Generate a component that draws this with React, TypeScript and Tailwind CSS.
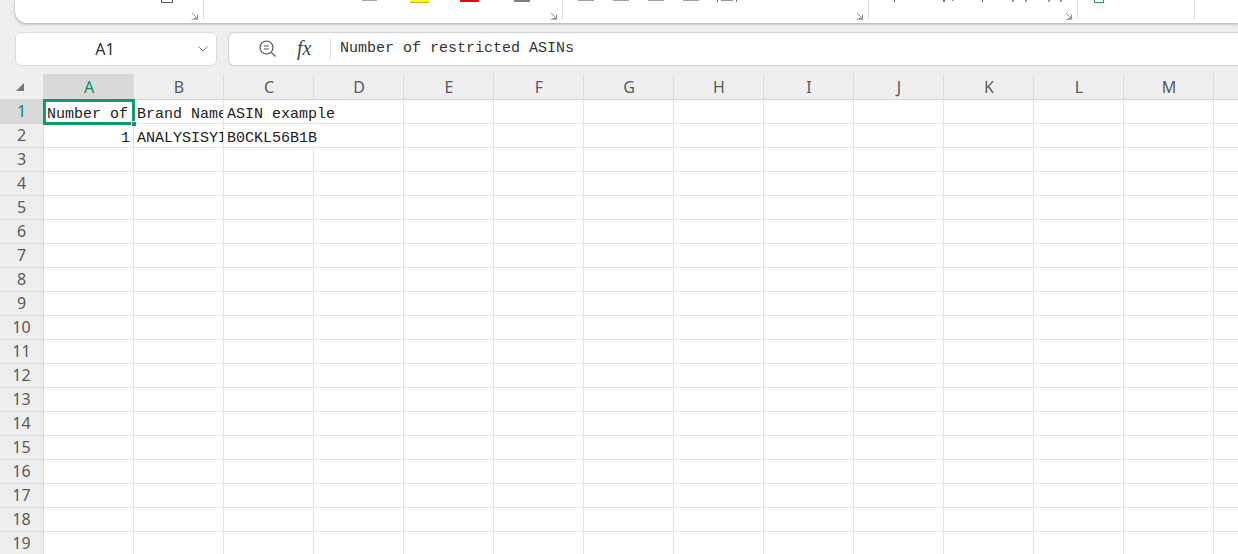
const columns = ["A", "B", "C", "D", "E", "F", "G", "H", "I", "J", "K", "L", "M", ""];
const rows = Array.from({ length: 19 }, (_, i) => i + 1);

function Launcher() {
  return (
    <svg viewBox="0 0 8 8" className="absolute right-[4px] top-[12px] h-[8px] w-[8px]" fill="none" aria-hidden="true">
      <path d="M1 1 6 6M2.5 6.5H6.5V2.5" stroke="#8a8a8a" strokeWidth="1" />
      <path d="M0.5 7.5H7.5" stroke="#b5b5b5" strokeWidth="1" />
    </svg>
  );
}

function ZoomIcon() {
  return (
    <svg viewBox="0 0 18 18" className="h-[18px] w-[18px]" fill="none" aria-hidden="true">
      <circle cx="7.5" cy="7.5" r="6.5" stroke="#555" strokeWidth="1.2" />
      <path d="M5 6H10M5 9H10" stroke="#555" strokeWidth="1.2" />
      <path d="M12.3 12.3 16.5 16.5" stroke="#555" strokeWidth="1.2" />
    </svg>
  );
}

function Chevron() {
  return (
    <svg viewBox="0 0 10 6" className="h-[6px] w-[10px]" fill="none" aria-hidden="true">
      <path d="M0.5 0.5 5 5 9.5 0.5" stroke="#777" strokeWidth="1" />
    </svg>
  );
}

function Ribbon() {
  return (
    <div className="ml-[15px] flex h-[23px] shrink-0 items-start overflow-hidden rounded-bl-xl bg-white shadow-[0_1px_3px_rgba(0,0,0,0.3)]">
      <div className="relative flex h-[19px] w-[189px] items-start border-r border-[#dcdcdc]">
        <div className="ml-[146px] h-[3px] w-[12px] rounded-b-[1px] border-x border-b border-[#555]" />
        <Launcher />
      </div>
      <div className="relative flex h-[19px] w-[359px] items-start border-r border-[#dcdcdc]">
        <div className="ml-[158px] h-[1px] w-[15px] bg-[#a8a8a8]" />
        <div className="ml-[33px] h-[2px] w-[19px] rounded-b-[1px] bg-[#ffff00] shadow-[0_1px_0_#b8b820]" />
        <div className="ml-[31px] h-[2px] w-[19px] rounded-b-[1px] bg-[#f00000]" />
        <div className="ml-[35px] h-[2px] w-[16px] bg-[#808080]" />
        <Launcher />
      </div>
      <div className="relative flex h-[19px] w-[306px] items-start border-r border-[#dcdcdc]">
        <div className="ml-[15px] h-[1px] w-[16px] bg-[#a0a0a0]" />
        <div className="ml-[19px] h-[1px] w-[16px] bg-[#a0a0a0]" />
        <div className="ml-[19px] h-[1px] w-[16px] bg-[#a0a0a0]" />
        <div className="ml-[19px] h-[1px] w-[16px] bg-[#a0a0a0]" />
        <div className="ml-[18px] h-[2px] w-[20px] border-x border-[#777] px-[3px]">
          <div className="h-[1px] bg-[#999]" />
        </div>
        <Launcher />
      </div>
      <div className="relative flex h-[19px] w-[209px] items-start border-r border-[#dcdcdc]">
        <div className="ml-[25px] h-[2px] w-[1px] bg-[#555]" />
        <div className="ml-[48px] h-[2px] w-[2px] bg-[#777]" />
        <div className="ml-[7px] h-[1px] w-[2px] bg-[#aaa]" />
        <div className="ml-[28px] h-[2px] w-[1px] bg-[#555]" />
        <div className="ml-[29px] h-[2px] w-[15px] border-x-2 border-[#999]" />
        <div className="ml-[21px] h-[2px] w-[14px] border-x-2 border-[#999]" />
        <Launcher />
      </div>
      <div className="flex h-[19px] w-[117px] items-start border-r border-[#dcdcdc]">
        <div className="ml-[16px] h-[3px] w-[10px] rounded-b-[1px] border-x border-b border-[#0f9b6e]" />
      </div>
    </div>
  );
}

function FormulaRow() {
  return (
    <div className="mt-[9px] flex h-[34px] shrink-0 gap-[11px] pl-[15px]">
      <div className="flex w-[202px] items-center rounded-md border border-[#dadada] bg-white pr-[8px]">
        <span className="flex-1 pb-[1px] pr-[4px] text-center text-[16px] text-[#333] [font-family:'Noto_Sans',sans-serif]">A1</span>
        <Chevron />
      </div>
      <div className="flex flex-1 items-center rounded-l-md border-y border-l border-[#d2d2d2] bg-white">
        <div className="ml-[30px]">
          <ZoomIcon />
        </div>
        <span className="ml-[20px] w-[20px] pb-[2px] text-[20px] italic leading-none text-[#444] [font-family:'Liberation_Serif',serif]">fx</span>
        <div className="ml-[13px] h-[22px] w-px bg-[#dcdcdc]" />
        <span className="ml-[9px] text-[15px] text-[#333] [font-family:'Liberation_Mono',monospace]">Number of restricted ASINs</span>
      </div>
    </div>
  );
}

function ColumnHeader() {
  return (
    <div className="mt-[8px] flex h-[26px] shrink-0 border-b border-[#d8d8d8]">
      <div className="flex w-[44px] shrink-0 items-center justify-center border-r border-[#dcdcdc]">
        <svg viewBox="0 0 8 8" className="ml-[-3px] h-[8px] w-[8px]" aria-hidden="true">
          <path d="M8 0V8H0Z" fill="#777" />
        </svg>
      </div>
      {columns.map((c, i) => (
        <div
          key={i}
          className={
            i === 0
              ? "flex w-[90px] shrink-0 items-center justify-center border-r border-[#dcdcdc] bg-[#d9d9d9] pl-[1px] pt-[1px] text-[16px] text-[#0f8a63] [font-family:'Noto_Sans',sans-serif]"
              : "flex w-[90px] shrink-0 items-center justify-center border-r border-[#dcdcdc] pl-[1px] pt-[1px] text-[16px] text-[#5a5a5a] [font-family:'Noto_Sans',sans-serif]"
          }
        >
          {c}
        </div>
      ))}
    </div>
  );
}

const cellText = "overflow-hidden whitespace-nowrap pl-[3px] pt-[2px] text-[15px] leading-[25px] text-[#222] [font-family:'Liberation_Mono',monospace]";
const spillText = "whitespace-nowrap pl-[3px] pt-[2px] text-[15px] leading-[25px] text-[#222] [font-family:'Liberation_Mono',monospace]";

function Cell({ r, c }: { r: number; c: number }) {
  let body = null;
  if (r === 1 && c === 0) body = <div className={cellText + " h-[23px]"}>Number of restricted ASINs</div>;
  if (r === 1 && c === 1) body = <div className={cellText + " h-[23px]"}>Brand Name</div>;
  if (r === 1 && c === 2) body = <div className={spillText}>ASIN example</div>;
  if (r === 2 && c === 0) body = <div className={cellText + " h-[23px] pr-[3px] text-right"}>1</div>;
  if (r === 2 && c === 1) body = <div className={cellText + " h-[23px]"}>ANALYSISYINC</div>;
  if (r === 2 && c === 2) body = <div className={spillText}>B0CKL56B1B</div>;

  // text in column C runs over the empty cell beside it, so no divider there
  const noDivider = c === 2 && r <= 2;
  return (
    <div
      className={
        noDivider
          ? "relative z-10 h-[24px] w-[90px] shrink-0 border-r border-b border-r-transparent border-b-[#e3e3e3]"
          : "relative h-[24px] w-[90px] shrink-0 border-r border-b border-[#e3e3e3]"
      }
    >
      {body}
    </div>
  );
}

export default function App() {
  return (
    <div className="flex h-[554px] w-[1238px] flex-col overflow-hidden bg-[#efefef]">
      <Ribbon />
      <FormulaRow />
      <ColumnHeader />
      <div className="relative min-h-0 flex-1 bg-white">
        {rows.map((r) => (
          <div key={r} className="flex h-[24px]">
            <div
              className={
                r === 1
                  ? "flex w-[44px] shrink-0 items-center justify-center border-r border-b border-[#d8d8d8] bg-[#d9d9d9] pb-[2px] text-[16px] text-[#0f8a63] [font-family:'Noto_Sans',sans-serif]"
                  : "flex w-[44px] shrink-0 items-center justify-center border-r border-b border-[#dcdcdc] bg-[#eeeeee] pb-[2px] text-[16px] text-[#5a5a5a] [font-family:'Noto_Sans',sans-serif]"
              }
            >
              {r}
            </div>
            {columns.map((_, c) => (
              <Cell key={c} r={r} c={c} />
            ))}
          </div>
        ))}
        {/* active cell cursor */}
        <div className="pointer-events-none absolute left-[43px] top-[-1px] z-20 h-[26px] w-[92px] border-[3px] border-[#0f9b6e]">
          <div className="absolute bottom-[-5px] right-[-5px] h-[6px] w-[6px] border border-white bg-[#0f9b6e]" />
        </div>
      </div>
    </div>
  );
}
